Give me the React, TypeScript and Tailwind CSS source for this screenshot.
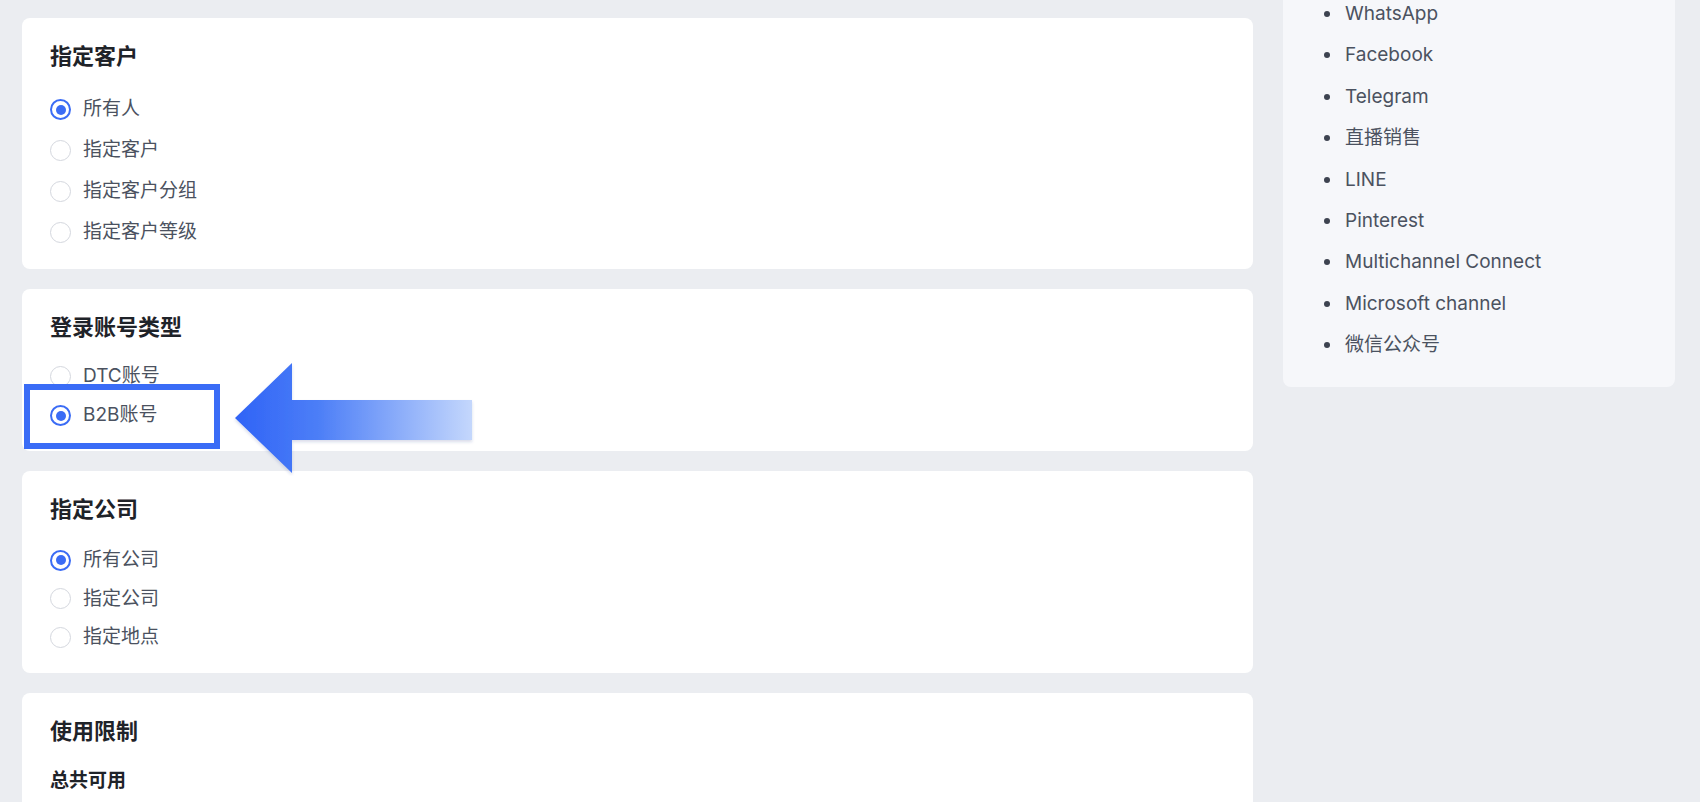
import React from "react";

const font = { fontFamily: "Inter, 'Noto Sans CJK SC', sans-serif" };

const channels = [
  "WhatsApp",
  "Facebook",
  "Telegram",
  "直播销售",
  "LINE",
  "Pinterest",
  "Multichannel Connect",
  "Microsoft channel",
  "微信公众号",
];

function Radio({ checked }: { checked?: boolean }) {
  return checked ? (
    <span className="w-[21px] h-[21px] rounded-full border-[2.5px] border-[#3b6cf5] flex items-center justify-center shrink-0">
      <span className="w-[10px] h-[10px] rounded-full bg-[#3b6cf5]" />
    </span>
  ) : (
    <span className="w-[21px] h-[21px] rounded-full border-[1.5px] border-[#d4d7de] bg-white shrink-0" />
  );
}

function Option({ label, checked, rowClass }: { label: string; checked?: boolean; rowClass: string }) {
  return (
    <div className={`flex items-center gap-[12px] ${rowClass}`}>
      <Radio checked={checked} />
      <span className="text-[19px] text-[#4b5260]">{label}</span>
    </div>
  );
}

function Card({ title, children, gapClass }: { title: string; children: React.ReactNode; gapClass: string }) {
  return (
    <div className="bg-white rounded-lg pl-[28px] pr-6 pt-[24px] pb-[16px]">
      <h2 className={`text-[22px] leading-[28px] font-semibold text-[#1f2329] ${gapClass}`}>{title}</h2>
      {children}
    </div>
  );
}

export default function App() {
  return (
    <div className="relative w-[1700px] h-[802px] overflow-hidden bg-[#ebedf1]" style={font}>
      <div className="flex gap-[30px] pl-[22px]">
        {/* left column */}
        <div className="w-[1231px] pt-[18px] flex flex-col gap-[20px]">
          <Card title="指定客户" gapClass="mb-[19px]">
            <Option label="所有人" checked rowClass="h-[41px]" />
            <Option label="指定客户" rowClass="h-[41px]" />
            <Option label="指定客户分组" rowClass="h-[41px]" />
            <Option label="指定客户等级" rowClass="h-[41px]" />
          </Card>

          <Card title="登录账号类型" gapClass="mb-[16px]">
            <Option label="DTC账号" rowClass="h-[39px]" />
            <Option label="B2B账号" checked rowClass="h-[39px]" />
          </Card>

          <Card title="指定公司" gapClass="mb-[18px]">
            <Option label="所有公司" checked rowClass="h-[38.5px]" />
            <Option label="指定公司" rowClass="h-[38.5px]" />
            <Option label="指定地点" rowClass="h-[38.5px]" />
          </Card>

          <Card title="使用限制" gapClass="mb-[22px]">
            <p className="text-[19px] leading-[28px] font-semibold text-[#1f2329]">总共可用</p>
            <div className="h-[60px]" />
          </Card>
        </div>

        {/* right column */}
        <div className="w-[392px] self-start bg-[#f6f7fa] rounded-b-lg pl-[42px] pb-[21px]">
          <ul className="-mt-[7px] list-disc marker:text-[#3d4350] text-[19px] leading-[41.4px] text-[#4b5260] pl-[18px]">
            {channels.map((c) => (
              <li key={c} className="pl-[2px]">{c}</li>
            ))}
          </ul>
        </div>
      </div>

      {/* highlight box */}
      <div className="absolute left-[24px] top-[384px] w-[196px] h-[65px] border-[6px] border-[#3a6cf6]" />

      {/* arrow */}
      <svg className="absolute left-[233px] top-[360px]" width="242" height="116" viewBox="0 0 242 116">
        <defs>
          <linearGradient id="arrowGrad" x1="0" y1="0" x2="1" y2="0">
            <stop offset="0" stopColor="#2f63f6" />
            <stop offset="0.35" stopColor="#4c7ef7" />
            <stop offset="1" stopColor="#c4d7fc" />
          </linearGradient>
          <filter id="arrowShadow" x="-10%" y="-10%" width="120%" height="130%">
            <feDropShadow dx="0" dy="2" stdDeviation="1.5" floodColor="#1e3a8a" floodOpacity="0.18" />
          </filter>
        </defs>
        <polygon
          points="2,58 59,3 59,40 239,40 239,80 59,80 59,113"
          fill="url(#arrowGrad)"
          filter="url(#arrowShadow)"
        />
      </svg>
    </div>
  );
}
